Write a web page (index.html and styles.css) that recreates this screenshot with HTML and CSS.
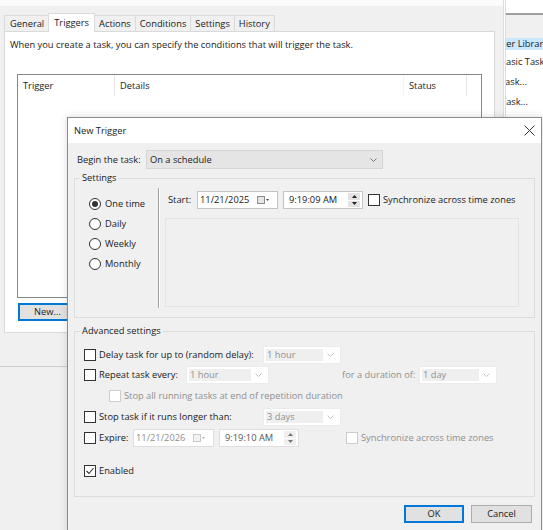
FILE: index.html
```html
<!DOCTYPE html>
<html lang="en">
<head>
    <meta charset="UTF-8">
    <meta name="viewport" content="width=device-width, initial-scale=1.0">
    <title>Task Properties - New Trigger</title>
    <link rel="stylesheet" href="styles.css">
</head>
<body>
    <div class="screen">
        <div class="props">
            <div class="props-top"></div>
            <div class="tabs">
                <span class="tab">General</span>
                <span class="tab active">Triggers</span>
                <span class="tab">Actions</span>
                <span class="tab">Conditions</span>
                <span class="tab">Settings</span>
                <span class="tab">History</span>
            </div>
            <div class="tab-panel">
                <p class="intro">When you create a task, you can specify the conditions that will trigger the task.</p>
                <div class="list">
                    <div class="list-head">
                        <span class="col col-trigger">Trigger</span>
                        <span class="col col-details">Details</span>
                        <span class="col col-status">Status</span>
                    </div>
                </div>
                <div class="list-actions">
                    <button class="btn btn-default btn-new">New...</button>
                </div>
            </div>
            <div class="props-foot"></div>
        </div>
        <div class="splitter"></div>
        <div class="pane">
            <div class="pane-top"></div>
            <div class="pane-band"></div>
            <div class="pane-head">Task Scheduler Library</div>
            <div class="pane-item first">Create Basic Task...</div>
            <div class="pane-item">Create Task...</div>
            <div class="pane-item">Import Task...</div>
        </div>
    </div>

    <div class="dialog">
        <div class="dlg-title">
            <span>New Trigger</span>
            <svg class="close" width="11" height="11" viewBox="0 0 11 11">
                <path d="M0.5 0.5 L10.5 10.5 M10.5 0.5 L0.5 10.5" stroke="#333" stroke-width="1" fill="none"/>
            </svg>
        </div>
        <div class="dlg-body">
            <div class="begin-row">
                <span class="begin-label">Begin the task:</span>
                <div class="combo-main">
                    <span>On a schedule</span>
                    <svg width="7" height="4" viewBox="0 0 7 4"><polyline points="0.5,0.5 3.5,3.5 6.5,0.5" stroke="#777" fill="none"/></svg>
                </div>
            </div>

            <fieldset class="group">
                <legend>Settings</legend>
                <div class="settings-body">
                    <div class="freq">
                        <div class="radio-row"><span class="radio on"></span>One time</div>
                        <div class="radio-row"><span class="radio"></span>Daily</div>
                        <div class="radio-row"><span class="radio"></span>Weekly</div>
                        <div class="radio-row"><span class="radio"></span>Monthly</div>
                    </div>
                    <div class="sched">
                        <div class="start-row">
                            <span class="start-label">Start:</span>
                            <div class="field date">
                                <span class="field-text">11/21/2025</span>
                                <svg class="cal" width="12" height="8" viewBox="0 0 12 8">
                                    <rect x="0.5" y="0.5" width="7" height="7" fill="#e6e6e6" stroke="#8a8a8a"/>
                                    <path d="M9 3 L12 3 L10.5 5 Z" fill="#444"/>
                                </svg>
                            </div>
                            <div class="field time">
                                <span class="field-text">9:19:09 AM</span>
                                <span class="spin">
                                    <span class="spin-btn"><svg width="5" height="3" viewBox="0 0 5 3"><path d="M0 3 L2.5 0 L5 3 Z" fill="#222"/></svg></span>
                                    <span class="spin-btn"><svg width="5" height="3" viewBox="0 0 5 3"><path d="M0 0 L5 0 L2.5 3 Z" fill="#222"/></svg></span>
                                </span>
                            </div>
                            <span class="cb sync"></span>
                            <span>Synchronize across time zones</span>
                        </div>
                        <div class="recur-panel"></div>
                    </div>
                </div>
            </fieldset>

            <fieldset class="group adv">
                <legend>Advanced settings</legend>
                <div class="adv-body">
                    <div class="adv-row">
                        <span class="cb"></span>
                        <span class="lbl lbl-long">Delay task for up to (random delay):</span>
                        <div class="combo dis">
                            <span class="combo-field">1 hour</span>
                            <span class="combo-arrow"><svg width="7" height="4" viewBox="0 0 7 4"><polyline points="0.5,0.5 3.5,3.5 6.5,0.5" stroke="#c4c4c4" fill="none"/></svg></span>
                        </div>
                    </div>
                    <div class="adv-row">
                        <span class="cb"></span>
                        <span class="lbl lbl-repeat">Repeat task every:</span>
                        <div class="combo dis combo-repeat">
                            <span class="combo-field">1 hour</span>
                            <span class="combo-arrow"><svg width="7" height="4" viewBox="0 0 7 4"><polyline points="0.5,0.5 3.5,3.5 6.5,0.5" stroke="#c4c4c4" fill="none"/></svg></span>
                        </div>
                        <span class="muted lbl-duration">for a duration of:</span>
                        <div class="combo dis">
                            <span class="combo-field">1 day</span>
                            <span class="combo-arrow"><svg width="7" height="4" viewBox="0 0 7 4"><polyline points="0.5,0.5 3.5,3.5 6.5,0.5" stroke="#c4c4c4" fill="none"/></svg></span>
                        </div>
                    </div>
                    <div class="adv-row row-indent">
                        <span class="cb cb-dis"></span>
                        <span class="lbl muted">Stop all running tasks at end of repetition duration</span>
                    </div>
                    <div class="adv-row">
                        <span class="cb"></span>
                        <span class="lbl lbl-long">Stop task if it runs longer than:</span>
                        <div class="combo dis">
                            <span class="combo-field">3 days</span>
                            <span class="combo-arrow"><svg width="7" height="4" viewBox="0 0 7 4"><polyline points="0.5,0.5 3.5,3.5 6.5,0.5" stroke="#c4c4c4" fill="none"/></svg></span>
                        </div>
                    </div>
                    <div class="adv-row">
                        <span class="cb"></span>
                        <span class="lbl lbl-expire">Expire:</span>
                        <div class="field date field-dis">
                            <span class="field-text">11/21/2026</span>
                            <svg class="cal" width="12" height="8" viewBox="0 0 12 8">
                                <rect x="0.5" y="0.5" width="7" height="7" fill="#f2f2f2" stroke="#c8c8c8"/>
                                <path d="M9 3 L12 3 L10.5 5 Z" fill="#b0b0b0"/>
                            </svg>
                        </div>
                        <div class="field time field-dis">
                            <span class="field-text time-text">9:19:10 AM</span>
                            <span class="spin spin-dis">
                                <span class="spin-btn"><svg width="5" height="3" viewBox="0 0 5 3"><path d="M0 3 L2.5 0 L5 3 Z" fill="#777"/></svg></span>
                                <span class="spin-btn"><svg width="5" height="3" viewBox="0 0 5 3"><path d="M0 0 L5 0 L2.5 3 Z" fill="#777"/></svg></span>
                            </span>
                        </div>
                        <span class="cb cb-dis sync-dis"></span>
                        <span class="lbl muted">Synchronize across time zones</span>
                    </div>
                    <div class="adv-row row-enabled">
                        <span class="cb">
                            <svg width="10" height="10" viewBox="0 0 10 10"><polyline points="1.5,5 4,7.5 8.5,2" stroke="#333" stroke-width="1.1" fill="none"/></svg>
                        </span>
                        <span class="lbl">Enabled</span>
                    </div>
                </div>
            </fieldset>

            <div class="dlg-buttons">
                <button class="btn btn-default btn-ok">OK</button>
                <button class="btn btn-cancel">Cancel</button>
            </div>
        </div>
    </div>
</body>
</html>
```

FILE: styles.css
```css
* {
    box-sizing: border-box;
    margin: 0;
    padding: 0;
}

body {
    position: relative;
    width: 543px;
    height: 530px;
    overflow: hidden;
    font-family: "Open Sans", "Noto Sans", sans-serif;
    font-size: 9.3px;
    line-height: 12px;
    color: #1a1a1a;
    background: #f0f0f0;
}

.screen {
    display: flex;
    height: 530px;
}

/* task properties window */
.props {
    width: 503px;
    display: flex;
    flex-direction: column;
}

.props-top {
    height: 6px;
    background: #fbfbfb;
}

.tabs {
    display: flex;
    align-items: flex-end;
    height: 25px;
    padding-left: 4px;
}

.tab {
    height: 16px;
    line-height: 15px;
    padding: 0 4px;
    border: 1px solid #dadada;
    border-bottom: none;
    border-left: none;
}

.tab:first-child {
    border-left: 1px solid #dadada;
    padding-left: 5px;
}

.tab.active {
    position: relative;
    z-index: 1;
    height: 19px;
    line-height: 17px;
    margin-bottom: -1px;
    margin-left: -1px;
    padding: 0 5px;
    border-left: 1px solid #dadada;
    background: #fff;
}

.tab-panel {
    height: 302px;
    margin: 0 8px 0 4px;
    padding: 7px 0 0 5px;
    background: #fff;
    border: 1px solid #d9d9d9;
}

.list {
    width: 465px;
    height: 224px;
    margin: 23px 0 0 7px;
    border: 1px solid #828790;
    background: #fff;
}

.list-head {
    display: flex;
    height: 21px;
}

.col {
    padding-left: 5px;
    line-height: 21px;
    border-right: 1px solid #e5e5e5;
}

.col-trigger { width: 97px; }
.col-details { width: 289px; border-right-color: #f4f4f4; }
.col-status { width: 63px; }

.list-actions {
    margin: 5px 0 0 8px;
}

.btn {
    height: 18px;
    font: inherit;
    color: #1a1a1a;
    background: #e1e1e1;
    border: 1px solid #adadad;
}

.btn-default {
    border-color: #0078d7;
    box-shadow: inset 0 0 0 1px #0078d7;
}

.btn-new { width: 59px; }
.btn-ok { width: 60px; }
.btn-cancel { width: 61px; }

.props-foot {
    margin-top: 33px;
    border-top: 1px solid #cdcdcd;
}

.splitter {
    width: 3px;
    background: #fff;
    border-left: 1px solid #dcdcdc;
    border-right: 1px solid #dcdcdc;
}

/* actions pane on the right */
.pane {
    flex: 1;
    overflow: hidden;
    background: #fff;
    white-space: nowrap;
}

.pane-top {
    height: 15px;
    border-bottom: 2px solid #a0a0a0;
}

.pane-band {
    height: 23px;
    background: #f0f0f0;
}

.pane-head {
    height: 12px;
    line-height: 12px;
    text-indent: -56px;
    background: #cce8ff;
}

.pane-item {
    height: 20px;
    line-height: 20px;
    text-indent: -37px;
}

.pane-item.first {
    margin-top: 2px;
}

/* new trigger dialog */
.dialog {
    position: absolute;
    left: 67px;
    top: 117px;
    width: 475px;
    height: 420px;
    background: #f0f0f0;
    border: 1px solid #8c8c8c;
    box-shadow: 0 0 8px rgba(0, 0, 0, 0.15);
}

.dlg-title {
    display: flex;
    align-items: center;
    justify-content: space-between;
    height: 25px;
    padding: 0 6px;
    background: #fff;
}

.dlg-body {
    padding-top: 7px;
}

.begin-row {
    display: flex;
    align-items: center;
    height: 19px;
    padding-left: 9px;
}

.begin-label {
    width: 69px;
}

.combo-main {
    display: flex;
    align-items: center;
    justify-content: space-between;
    width: 237px;
    height: 19px;
    padding: 0 5px 0 3px;
    background: #e5e5e5;
    border: 1px solid #d5d5d5;
}

.group {
    width: 461px;
    min-width: 0;
    margin: 3px 0 0 6px;
    padding: 0;
    border: 1px solid #dcdcdc;
}

.group legend {
    margin-left: 5px;
    padding: 0 2px;
    line-height: 12px;
}

.group.adv {
    margin-top: 7px;
}

.settings-body {
    display: flex;
}

.freq {
    width: 83px;
    padding: 10px 0 0 14px;
}

.radio-row {
    display: flex;
    align-items: center;
    gap: 4px;
    height: 20px;
}

.radio {
    display: flex;
    align-items: center;
    justify-content: center;
    width: 12px;
    height: 12px;
    border: 1px solid #333;
    border-radius: 50%;
    background: #fff;
}

.radio.on::after {
    content: "";
    width: 6px;
    height: 6px;
    border-radius: 50%;
    background: #333;
}

.sched {
    margin: 4px 0 9px;
    padding: 3px 0 1px 6px;
    border-left: 1px solid #a0a0a0;
    box-shadow: inset 1px 0 0 #fff;
}

.start-row {
    display: flex;
    align-items: center;
    height: 18px;
    margin-left: 3px;
}

.start-label {
    width: 29px;
}

.field {
    display: flex;
    align-items: center;
    height: 18px;
    background: #fff;
    border: 1px solid #c4c4c4;
}

.field-text {
    flex: 1;
    padding-left: 2px;
}

.date {
    width: 81px;
    padding-right: 8px;
}

.time {
    width: 80px;
    margin-left: 5px;
    padding-right: 2px;
}

.time .field-text {
    padding-left: 5px;
}

.spin {
    display: flex;
    flex-direction: column;
    gap: 1px;
    width: 12px;
    height: 14px;
}

.spin-btn {
    display: flex;
    align-items: center;
    justify-content: center;
    flex: 1;
    background: #e3e3e3;
}

.spin-dis .spin-btn {
    background: #efefef;
}

.field-dis {
    border-color: #dedede;
    color: #8f8f8f;
}

.time-text {
    color: #555;
}

.cb {
    display: flex;
    align-items: center;
    justify-content: center;
    flex: none;
    width: 12px;
    height: 12px;
    margin-right: 3px;
    background: #fff;
    border: 1px solid #333;
}

.cb-dis {
    border-color: #cdcdcd;
}

.sync {
    margin-left: 5px;
}

.sync-dis {
    margin-left: 47px;
}

.recur-panel {
    width: 354px;
    height: 89px;
    margin-top: 9px;
    border: 1px solid #e3e3e3;
}

.adv-body {
    padding: 8px 0 15px 9px;
}

.adv-row {
    display: flex;
    align-items: center;
    height: 20px;
    white-space: nowrap;
}

.adv-row + .adv-row {
    margin-top: 1px;
}

.adv-row:nth-child(2) {
    margin-top: 0;
}

.adv-row.row-enabled {
    margin-top: 13px;
}

.row-indent {
    padding-left: 25px;
}

.lbl-long { width: 164px; }
.lbl-repeat { width: 87px; }
.lbl-expire { width: 34px; }

.muted {
    color: #8f8f8f;
}

.lbl-duration {
    width: 77px;
    margin-left: 73px;
}

.combo {
    display: flex;
    align-items: center;
    width: 78px;
    height: 18px;
    padding: 2px;
    background: #fff;
    border: 1px solid #ececec;
}

.combo-repeat {
    width: 83px;
}

.combo-field {
    flex: 1;
    height: 100%;
    padding-left: 1px;
    line-height: 12px;
    color: #8f8f8f;
    background: #efefef;
}

.combo-arrow {
    display: flex;
    justify-content: center;
    width: 15px;
}

.dlg-buttons {
    display: flex;
    justify-content: flex-end;
    gap: 7px;
    margin-top: 8px;
    padding-right: 9px;
}
```
